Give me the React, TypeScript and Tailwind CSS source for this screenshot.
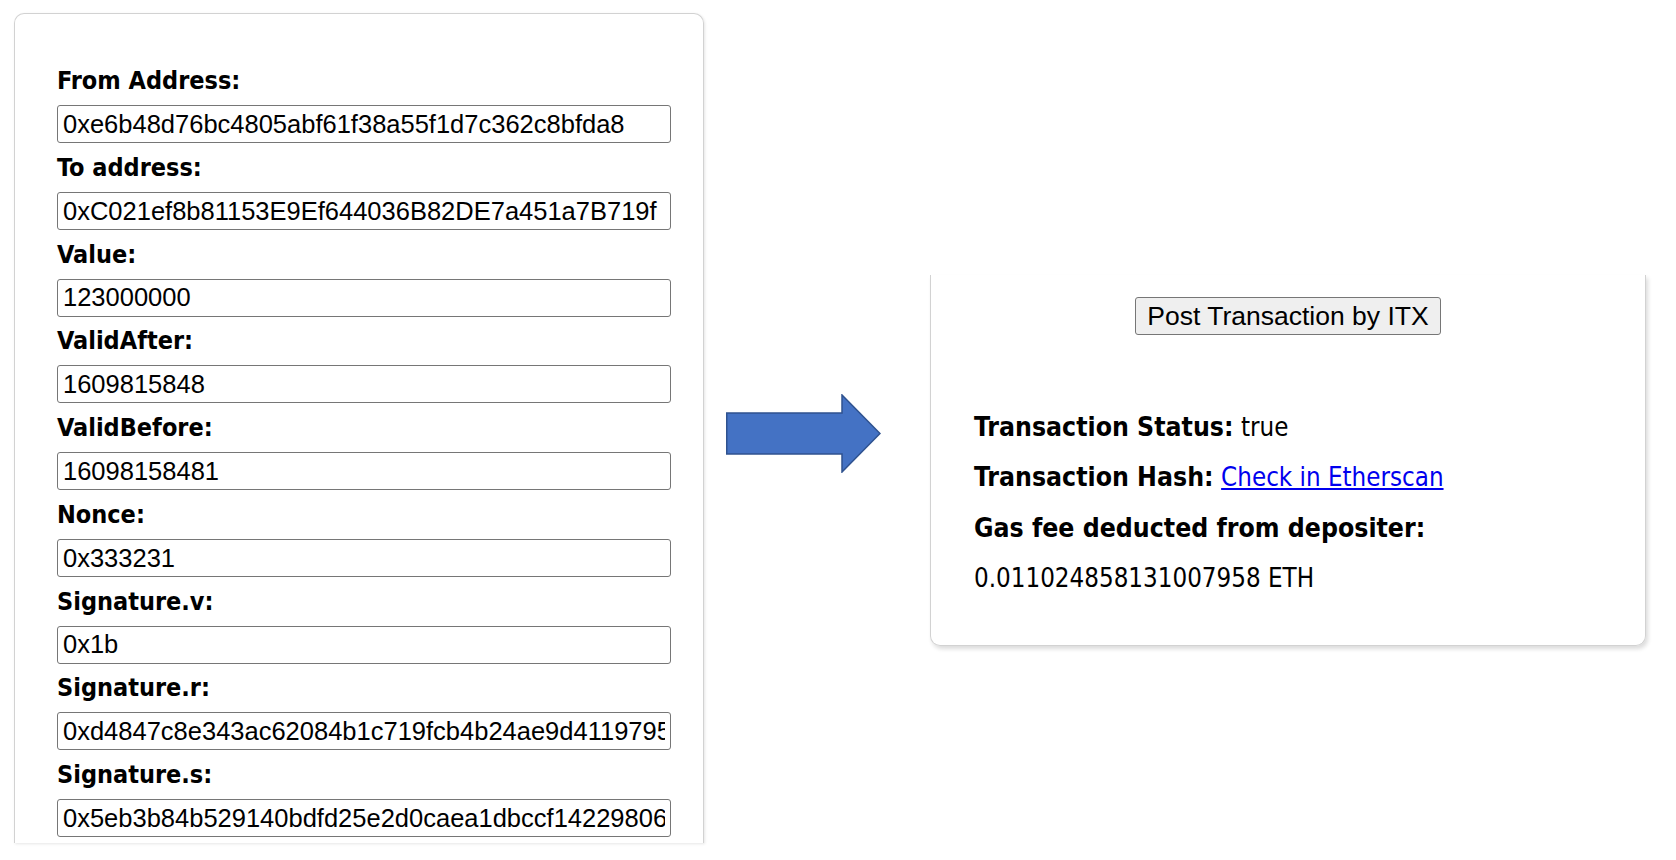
import React from 'react';

const fields = [
    { label: 'From Address:', value: '0xe6b48d76bc4805abf61f38a55f1d7c362c8bfda8' },
    { label: 'To address:', value: '0xC021ef8b81153E9Ef644036B82DE7a451a7B719f' },
    { label: 'Value:', value: '123000000' },
    { label: 'ValidAfter:', value: '1609815848' },
    { label: 'ValidBefore:', value: '16098158481' },
    { label: 'Nonce:', value: '0x333231' },
    { label: 'Signature.v:', value: '0x1b' },
    { label: 'Signature.r:', value: '0xd4847c8e343ac62084b1c719fcb4b24ae9d41197955' },
    { label: 'Signature.s:', value: '0x5eb3b84b529140bdfd25e2d0caea1dbccf14229806' },
];

const Arrow = () => (
    <svg width="155" height="79" viewBox="0 0 155 79" className="shrink-0">
        <path
            d="M0.75 19 H116 V1 L154 39.5 L116 78 V60 H0.75 Z"
            fill="#4472C4"
            stroke="#2F528F"
            strokeWidth="1.5"
            strokeLinejoin="miter"
        />
    </svg>
);

export default function App() {
    return (
        <div className="flex items-start w-[1676px] h-[860px] bg-white overflow-hidden">
            {/* Signed message form */}
            <div className="ml-[14px] mt-[13px] w-[690px] h-[830px] shrink-0 border border-b-0 border-[#d2d2d2] rounded-t-[10px] shadow-[1px_1px_3px_rgba(0,0,0,0.10)] pt-[52px] pl-[42px]">
                {fields.map((f) => (
                    <div key={f.label} className="mb-[9.75px]">
                        <label className="block h-[30px] leading-[30px] mb-[9px] text-[25px] font-bold text-black font-['DejaVu_Sans_Condensed','DejaVu_Sans',sans-serif]">
                            {f.label}
                        </label>
                        <input
                            readOnly
                            value={f.value}
                            className="block w-[614px] h-[38px] px-[5px] border border-[#767676] rounded-[3px] bg-white text-black text-[25.5px] leading-normal font-['Liberation_Sans',Arial,sans-serif] outline-none"
                        />
                    </div>
                ))}
            </div>

            <div className="ml-[22px] mt-[394px]">
                <Arrow />
            </div>

            {/* Result panel */}
            <div className="ml-[49px] mt-[275px] w-[716px] h-[371px] shrink-0 border border-t-0 border-[#d2d2d2] rounded-b-[10px] shadow-[2px_3px_4px_rgba(0,0,0,0.14)] pt-[22px]">
                <div className="flex justify-center">
                    <button className="h-[38px] px-[11px] bg-[#efefef] border border-[#767676] rounded-[3px] text-black text-[26.5px] leading-none font-['Liberation_Sans',Arial,sans-serif]">
                        Post Transaction by ITX
                    </button>
                </div>
                <div className="mt-[77px] pl-[43px] flex flex-col gap-[20.3px] text-[26.4px] leading-[30px] text-black font-['DejaVu_Sans_Condensed','DejaVu_Sans',sans-serif]">
                    <div>
                        <span className="font-bold">Transaction Status:</span>{' '}
                        <span className="text-[25.7px]">true</span>
                    </div>
                    <div>
                        <span className="font-bold">Transaction Hash:</span>{' '}
                        <a href="#" className="text-[25.7px] text-[#0000EE] underline">Check in Etherscan</a>
                    </div>
                    <div className="font-bold">Gas fee deducted from depositer:</div>
                    <div className="text-[25.7px]">0.011024858131007958 ETH</div>
                </div>
            </div>
        </div>
    );
}
